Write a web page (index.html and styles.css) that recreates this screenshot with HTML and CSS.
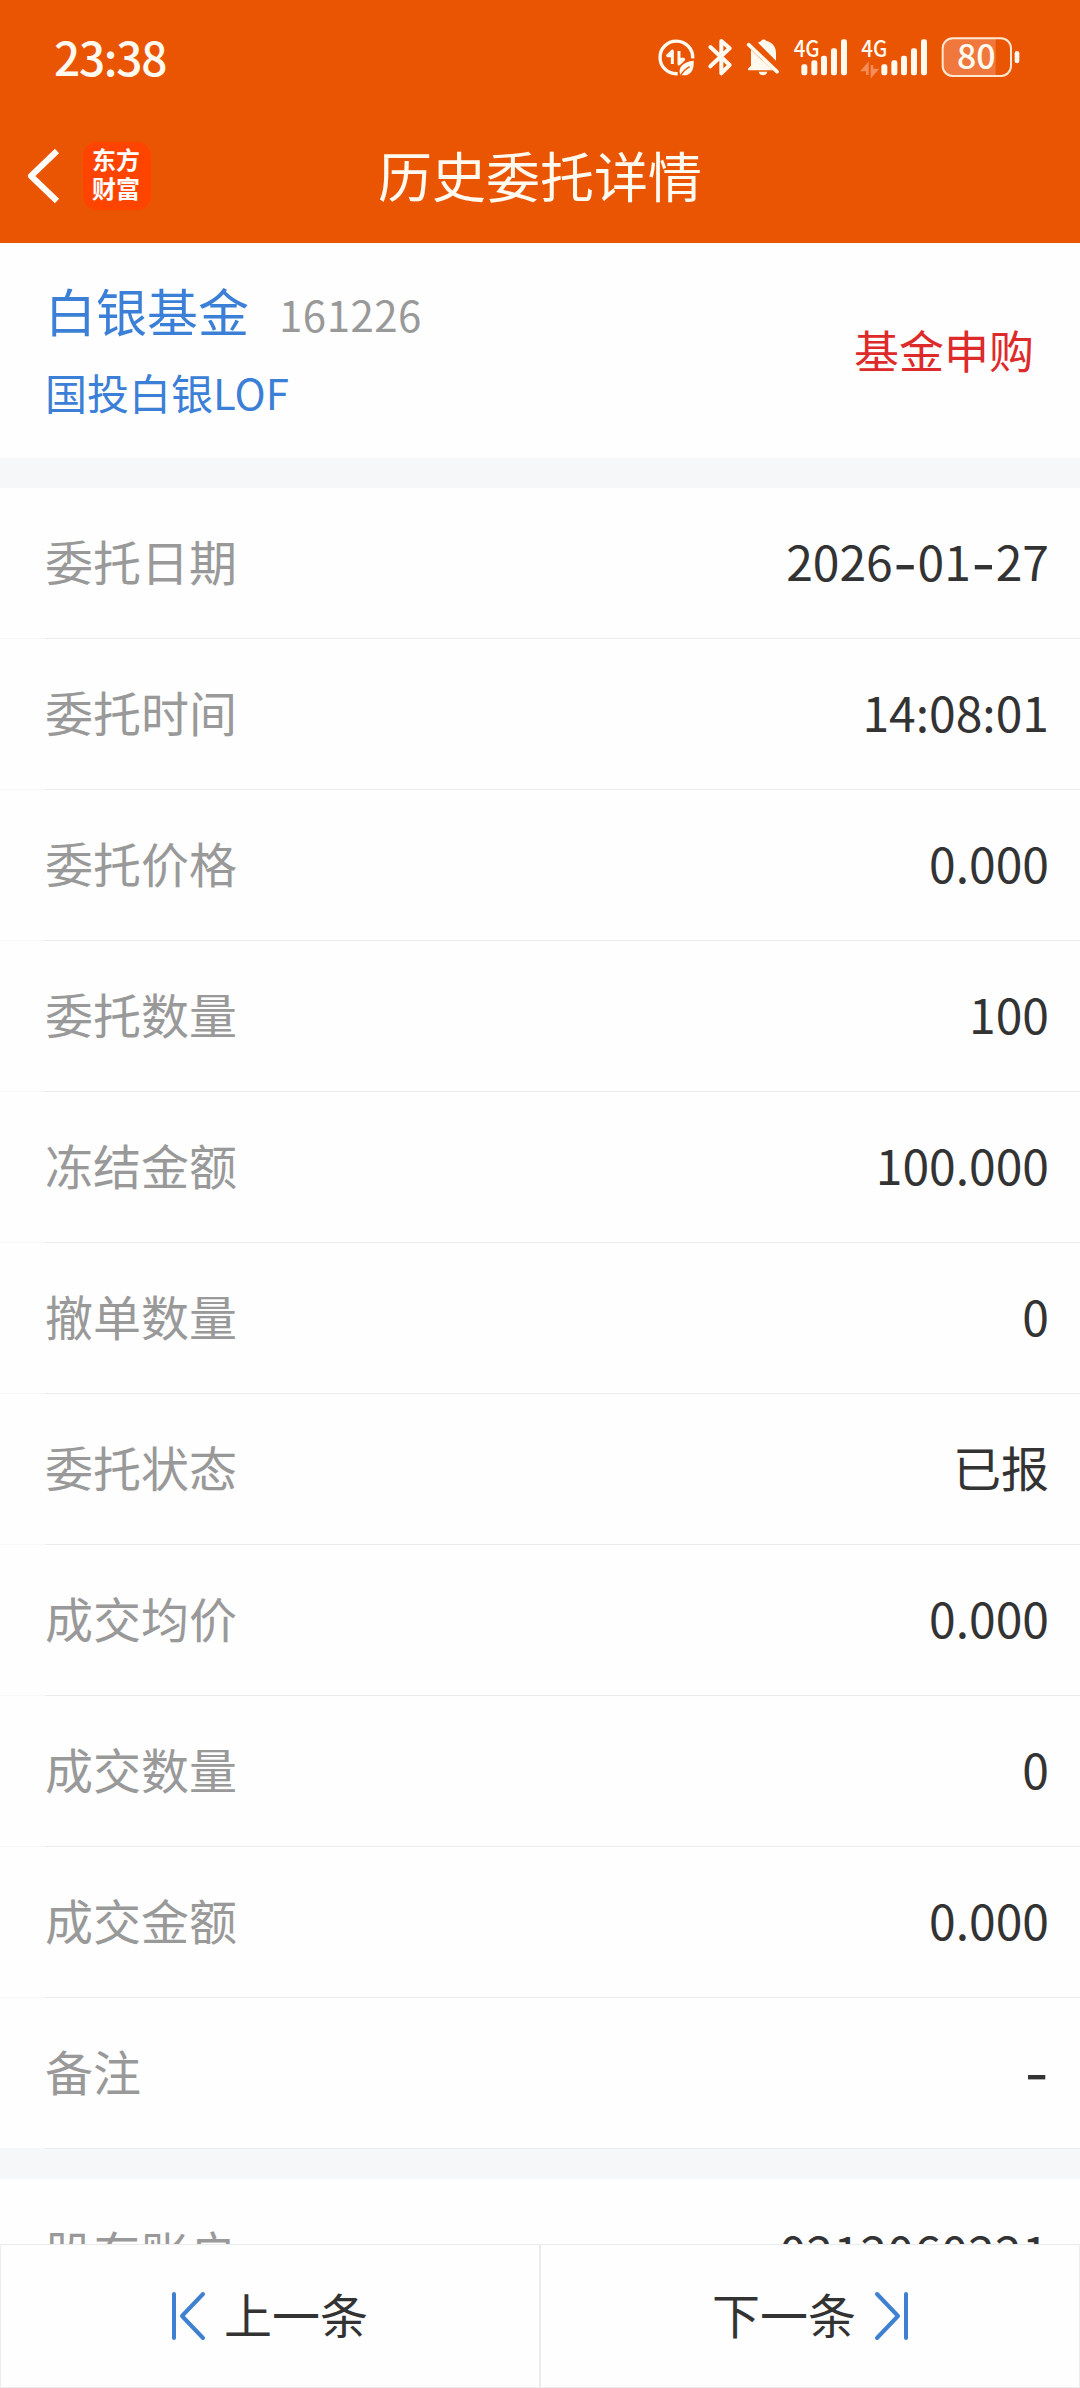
FILE: index.html
```html
<!DOCTYPE html>
<html lang="zh-CN">

<head>
  <meta charset="utf-8">
  <title>历史委托详情</title>
  <link rel="stylesheet" href="styles.css">
</head>

<body>
  <header>
    <div class="status">
      <span class="time">23:38</span>
      <div class="status_icons">
        <svg class="ic_data" width="38" height="40" viewBox="56 50 114 120">
          <path d="M118 160a49 49 0 1 1 45-46" fill="none" stroke="#fffaf0" stroke-width="10" />
          <path d="M102 131V92l-14 14h14M122 92v39l14-14h-14" fill="none" stroke="#fffaf0" stroke-width="9" stroke-linejoin="round" />
          <path d="M166 121c2 28-9 44-30 44h-9c-11-22 6-41 39-44z" fill="#fffaf0" />
          <path d="M126 167c7-12 15-21 28-28" fill="none" stroke="#ea5504" stroke-width="4" />
        </svg>
        <svg class="ic_bt" width="26" height="40" viewBox="206 50 78 120">
          <path d="M216 80l58 54-25 25V62l25 22-58 54" fill="none" stroke="#fffaf0" stroke-width="12" stroke-linecap="round" stroke-linejoin="round" />
        </svg>
        <svg class="ic_bell" width="34" height="40" viewBox="323 50 102 120">
          <path d="M359 67c5-3 8-4 10-6 2-5 12-5 14 0 20 5 30 18 30 38v22zM338 88l66 62h-75v-5l9-9zM361 154h26c-3 14-23 14-26 0z" fill="#fffaf0" />
          <path d="M331 73l85 81" fill="none" stroke="#fffaf0" stroke-width="11" stroke-linecap="round" />
        </svg>
        <svg class="ic_sig" width="56" height="40" viewBox="464 50 168 120">
          <text class="net" x="466" y="110" textLength="78" lengthAdjust="spacingAndGlyphs">4G</text>
          <g fill="#fffaf0">
            <rect x="489" y="132" width="18" height="33" rx="7" />
            <rect x="519" y="120" width="18" height="45" rx="7" />
            <rect x="548" y="106" width="18" height="59" rx="7" />
            <rect x="578" y="84" width="18" height="81" rx="7" />
            <rect x="608" y="57" width="18" height="108" rx="7" />
          </g>
        </svg>
        <svg class="ic_sig2" width="68" height="40" viewBox="668 50 204 120">
          <text class="net" x="669" y="110" textLength="78" lengthAdjust="spacingAndGlyphs">4G</text>
          <path d="M687 164v-30l-13 15h13M701 134v30l13-15h-13" fill="none" stroke="#f58d5a" stroke-width="8" />
          <g fill="#fffaf0">
            <rect x="729" y="132" width="18" height="33" rx="7" />
            <rect x="759" y="120" width="18" height="45" rx="7" />
            <rect x="788" y="106" width="18" height="59" rx="7" />
            <rect x="818" y="84" width="18" height="81" rx="7" />
            <rect x="848" y="57" width="18" height="108" rx="7" />
          </g>
        </svg>
        <svg class="ic_bat" width="80" height="40" viewBox="907 50 240 120">
          <path d="M1071 55H942a30 30 0 0 0-30 30v51a30 30 0 0 0 30 30h129z" fill="#f0783c" />
          <rect x="912" y="54" width="205" height="113" rx="30" fill="none" stroke="#ffe8d2" stroke-width="6" />
          <rect x="1128" y="92" width="14" height="37" rx="7" fill="#fffaf0" />
          <text class="bat" x="955" y="147" textLength="116" lengthAdjust="spacingAndGlyphs">80</text>
        </svg>
      </div>
    </div>
    <div class="titlebar">
      <svg class="back" width="36" height="60" viewBox="0 0 36 60">
        <path d="M32 5L6 30l26 25" fill="none" stroke="#fffefa" stroke-width="6" stroke-linejoin="round" />
      </svg>
      <div class="logo"><span>东方</span><span>财富</span></div>
      <h1>历史委托详情</h1>
    </div>
  </header>

  <section class="fund">
    <div>
      <p class="name">白银基金<span class="code">161226</span></p>
      <p class="fullname">国投白银LOF</p>
    </div>
    <span class="type">基金申购</span>
  </section>

  <ul class="list">
    <li><span>委托日期</span><b>2026<i>-</i>01<i>-</i>27</b></li>
    <li><span>委托时间</span><b>14:08:01</b></li>
    <li><span>委托价格</span><b>0.000</b></li>
    <li><span>委托数量</span><b>100</b></li>
    <li><span>冻结金额</span><b>100.000</b></li>
    <li><span>撤单数量</span><b>0</b></li>
    <li><span>委托状态</span><b>已报</b></li>
    <li><span>成交均价</span><b>0.000</b></li>
    <li><span>成交数量</span><b>0</b></li>
    <li><span>成交金额</span><b>0.000</b></li>
    <li><span>备注</span><b><i>-</i></b></li>
  </ul>

  <ul class="list account">
    <li><span>股东账户</span><b>0212060221</b></li>
  </ul>

  <footer>
    <a class="prev">
      <svg width="34" height="50" viewBox="0 0 34 50">
        <path d="M2 3v44M31 3L10 25l21 22" fill="none" stroke="#3f80d0" stroke-width="4" stroke-linecap="round" stroke-linejoin="round" />
      </svg>
      <span>上一条</span>
    </a>
    <a class="next">
      <span>下一条</span>
      <svg width="34" height="50" viewBox="0 0 34 50">
        <path d="M32 3v44M3 3l21 22L3 47" fill="none" stroke="#3f80d0" stroke-width="4" stroke-linecap="round" stroke-linejoin="round" />
      </svg>
    </a>
  </footer>
</body>

</html>
```

FILE: styles.css
```css
* {
  box-sizing: border-box;
  margin: 0;
  padding: 0;
}

body {
  background-color: #fefefe;
  color: #333;
  display: flex;
  flex-direction: column;
  font: 48px/1 "Noto Sans CJK SC", sans-serif;
  height: 2388px;
  overflow: hidden;
  width: 1080px;
}

svg {
  overflow: visible;
}

header {
  background-color: #ea5504;
  color: #fffaf0;
  flex: none;
  height: 243px;
  padding-top: 37px;
}

.status {
  align-items: center;
  display: flex;
  height: 40px;
  justify-content: space-between;
  padding: 0 59px 0 54px;
}

.time {
  font-size: 46px;
  font-weight: 500;
  letter-spacing: -1.3px;
  padding-bottom: 2px;
}

.status_icons {
  display: flex;
}

.ic_bt {
  margin-left: 12px;
}

.ic_bell {
  margin-left: 13px;
}

.ic_sig {
  margin-left: 13px;
}

.ic_sig2 {
  margin-left: 12px;
}

.ic_bat {
  margin-left: 12px;
}

.net {
  fill: #fffaf0;
  font-size: 70px;
  font-weight: 500;
}

.bat {
  fill: #fffaf0;
  font-size: 102px;
  font-weight: 500;
}

.titlebar {
  align-items: center;
  display: grid;
  grid-template-columns: 83px 68px 1fr 151px;
  height: 68px;
  margin-top: 65px;
}

.back {
  margin-left: 25px;
}

.logo {
  background-color: #ff4400;
  border-radius: 14px;
  color: #fff;
  display: flex;
  flex-direction: column;
  font-size: 24px;
  font-weight: 700;
  gap: 5px;
  height: 68px;
  padding: 5px 0 0 9px;
}

h1 {
  font-size: 54px;
  font-weight: 400;
  padding-bottom: 2px;
  text-align: center;
}

.fund {
  align-items: center;
  display: flex;
  flex: none;
  height: 215px;
  justify-content: space-between;
  padding: 0 46px 3px 45px;
}

.name {
  color: #3b7fd6;
  font-size: 51px;
}

.code {
  color: #999;
  font-size: 42px;
  letter-spacing: 0.5px;
  margin-left: 30px;
}

.fullname {
  color: #3b7fd6;
  font-size: 42px;
  margin-top: 35px;
}

.type {
  color: #dd2a2a;
  font-size: 45px;
}

.list {
  border-top: 30px solid #f6f7f9;
  flex: none;
  list-style-type: none;
}

.list li {
  align-items: center;
  background: linear-gradient(to right, #f7f7f7 45px, #ebebeb 45px) bottom / 100% 1px no-repeat;
  display: flex;
  height: 151px;
  justify-content: space-between;
  padding: 0 31px 7px 45px;
}

.list span {
  color: #999;
}

.list b {
  font-weight: 400;
}

/* longer dash than the CJK face has */
.list i {
  font-family: Inter, sans-serif;
  font-size: 54px;
  font-style: normal;
  line-height: 0;
  vertical-align: -3px;
}

.account {
  height: 95px;
  overflow: hidden;
}

.account b {
  letter-spacing: 0.3px;
}

footer {
  background-color: #fefefe;
  display: flex;
  flex: none;
  height: 144px;
}

footer a {
  align-items: center;
  border: 1px solid #ebebeb;
  display: flex;
  flex: 1;
  gap: 18px;
  justify-content: center;
}

footer span {
  padding-bottom: 6px;
}
```
